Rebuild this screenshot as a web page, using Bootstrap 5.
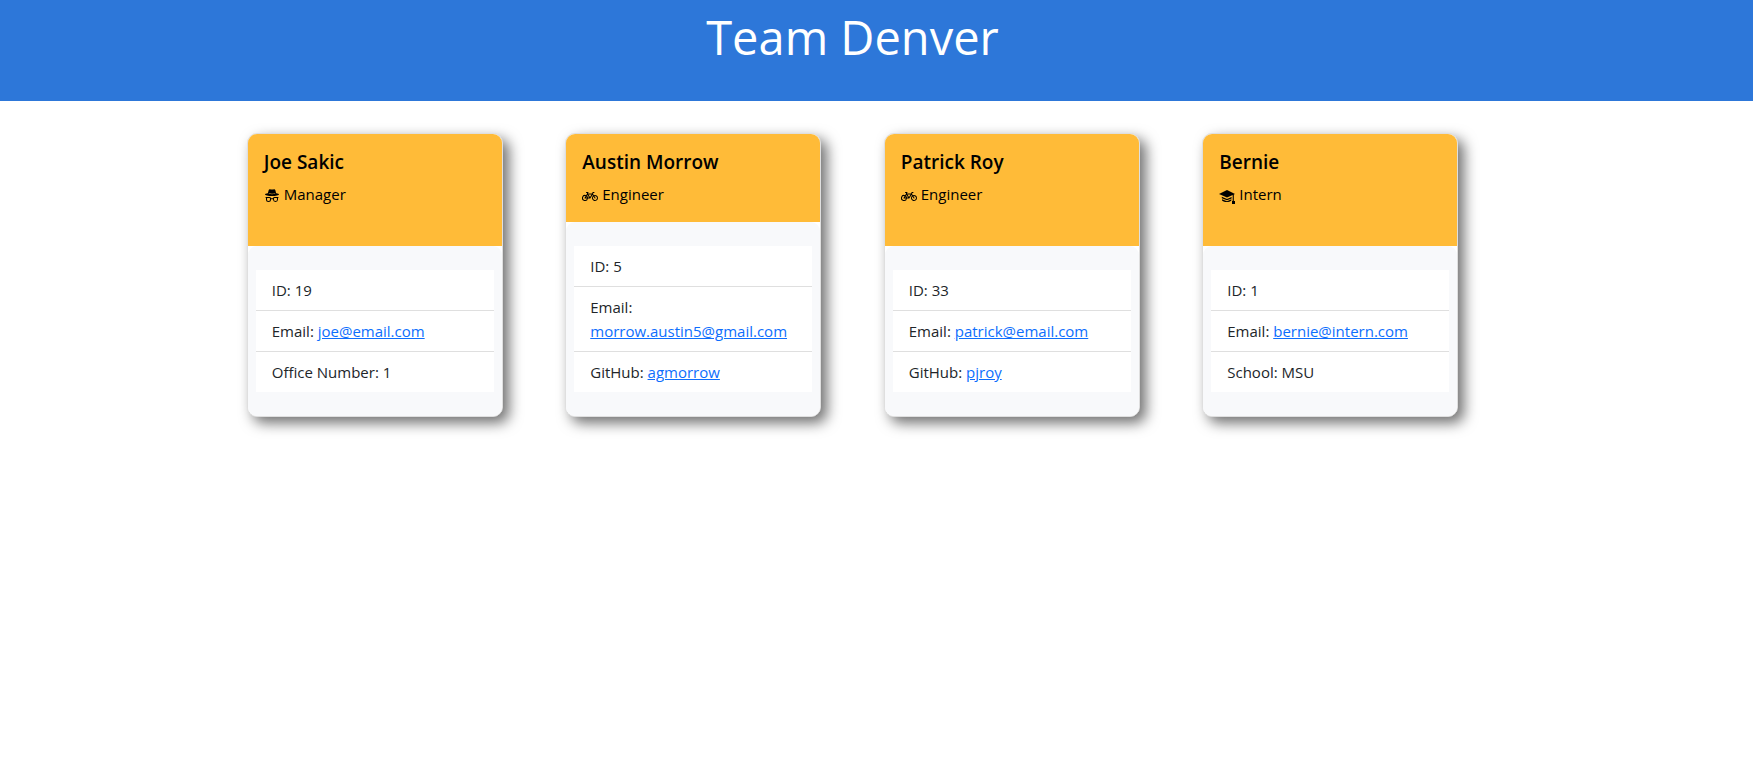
<!DOCTYPE html>
<html lang="en">
<head>
<meta charset="utf-8">
<meta name="viewport" content="width=device-width, initial-scale=1">
<title>Team Denver</title>
<link href="https://cdn.jsdelivr.net/npm/bootstrap@5.3.0/dist/css/bootstrap.min.css" rel="stylesheet">
<style>
  body { font-family: "Segoe UI", "Open Sans", "Noto Sans", sans-serif; font-size: 15px; line-height: 24px; }
  .team-header { background: #2d77d9; min-height: 101px; }
  .team-title { font-size: 47px; line-height: 58px; font-weight: 400; }
  .team-list { max-width: 1274px; row-gap: 32px; }
  .member { width: 256px; border-radius: 10px; border-color: #dfdfdf; box-shadow: 6px 6px 14px #707070; }
  .member-head { background: #ffbb38; border-radius: 9px 9px 0 0; color: #000; }
  .member-name { font-size: 19px; line-height: 24px; font-weight: 600; }
  .member-info { background: #f8f9fb; border-radius: 9px; }
  .member-info .list-group-item { border-color: #dfdfdf; color: #212529; }
  .member-info a { color: #0d6efd; }
  .role-icon { width: 16px; height: 16px; fill: currentColor; margin-top: 6px; }
</style>
</head>
<body class="min-vh-100">
<header class="team-header text-center text-white pt-2 pe-5">
  <h1 class="team-title mb-0">Team Denver</h1>
</header>
<main class="pe-5 pt-2 pb-5">
  <div class="team-list d-flex flex-wrap justify-content-around mx-auto pt-4">
    <section class="card member">
      <div class="member-head p-3 flex-grow-1">
        <h2 class="member-name mb-2">Joe Sakic</h2>
        <div class="d-flex gap-1">
          <svg class="role-icon" viewBox="0 0 16 16" aria-hidden="true"><path fill-rule="evenodd" d="m4.736 1.968-.892 3.269-.014.058C2.113 5.568 1 6.006 1 6.5 1 7.328 4.134 8 8 8s7-.672 7-1.5c0-.494-1.113-.932-2.83-1.205l-.014-.058-.892-3.27c-.146-.533-.698-.849-1.239-.734C9.411 1.363 8.62 1.5 8 1.5s-1.411-.136-2.025-.267c-.541-.115-1.093.2-1.239.735m.015 3.867a.25.25 0 0 1 .274-.224c.9.092 1.91.143 2.975.143a30 30 0 0 0 2.975-.143.25.25 0 0 1 .05.498c-.918.093-1.944.145-3.025.145s-2.107-.052-3.025-.145a.25.25 0 0 1-.224-.274M3.5 10h2a.5.5 0 0 1 .5.5v1a1.5 1.5 0 0 1-3 0v-1a.5.5 0 0 1 .5-.5m-1.5.5q.001-.264.085-.5H2a.5.5 0 0 1 0-1h3.5a1.5 1.5 0 0 1 1.488 1.312 3.5 3.5 0 0 1 2.024 0A1.5 1.5 0 0 1 10.5 9H14a.5.5 0 0 1 0 1h-.085q.084.236.085.5v1a2.5 2.5 0 0 1-5 0v-.14l-.21-.07a2.5 2.5 0 0 0-1.58 0l-.21.07v.14a2.5 2.5 0 0 1-5 0zm8.5-.5h2a.5.5 0 0 1 .5.5v1a1.5 1.5 0 0 1-3 0v-1a.5.5 0 0 1 .5-.5"/></svg>
          <span>Manager</span>
        </div>
      </div>
      <div class="member-info px-2 py-4">
        <ul class="list-group list-group-flush">
          <li class="list-group-item">ID: 19</li>
          <li class="list-group-item">Email: <a href="mailto:joe@email.com">joe@email.com</a></li>
          <li class="list-group-item">Office Number: 1</li>
        </ul>
      </div>
    </section>
    <section class="card member">
      <div class="member-head p-3 flex-grow-1">
        <h2 class="member-name mb-2">Austin Morrow</h2>
        <div class="d-flex gap-1">
          <svg class="role-icon" viewBox="0 0 16 16" aria-hidden="true"><path d="M4 4.5a.5.5 0 0 1 .5-.5H6a.5.5 0 0 1 0 1v.5h4.14l.386-1.158A.5.5 0 0 1 11 4h1a.5.5 0 0 1 0 1h-.64l-.311.935.807 1.29a3 3 0 1 1-.848.53l-.508-.812-2.076 3.322A.5.5 0 0 1 8 10.5H5.959a3 3 0 1 1-1.815-3.274L5 5.856V5h-.5a.5.5 0 0 1-.5-.5m1.5 2.443-.508.814c.5.444.85 1.054.967 1.743h1.139zM8 9.057 9.598 6.5H6.402zM4.937 9.5a2 2 0 0 0-.487-.877l-.548.877zM3.603 8.092A2 2 0 1 0 4.937 10.5H3a.5.5 0 0 1-.424-.765zm7.947.53a2 2 0 1 0 .848-.53l1.026 1.643a.5.5 0 1 1-.848.53z"/></svg>
          <span>Engineer</span>
        </div>
      </div>
      <div class="member-info px-2 py-4">
        <ul class="list-group list-group-flush">
          <li class="list-group-item">ID: 5</li>
          <li class="list-group-item">Email: <a href="mailto:morrow.austin5@gmail.com">morrow.austin5@gmail.com</a></li>
          <li class="list-group-item">GitHub: <a href="https://github.com/agmorrow">agmorrow</a></li>
        </ul>
      </div>
    </section>
    <section class="card member">
      <div class="member-head p-3 flex-grow-1">
        <h2 class="member-name mb-2">Patrick Roy</h2>
        <div class="d-flex gap-1">
          <svg class="role-icon" viewBox="0 0 16 16" aria-hidden="true"><path d="M4 4.5a.5.5 0 0 1 .5-.5H6a.5.5 0 0 1 0 1v.5h4.14l.386-1.158A.5.5 0 0 1 11 4h1a.5.5 0 0 1 0 1h-.64l-.311.935.807 1.29a3 3 0 1 1-.848.53l-.508-.812-2.076 3.322A.5.5 0 0 1 8 10.5H5.959a3 3 0 1 1-1.815-3.274L5 5.856V5h-.5a.5.5 0 0 1-.5-.5m1.5 2.443-.508.814c.5.444.85 1.054.967 1.743h1.139zM8 9.057 9.598 6.5H6.402zM4.937 9.5a2 2 0 0 0-.487-.877l-.548.877zM3.603 8.092A2 2 0 1 0 4.937 10.5H3a.5.5 0 0 1-.424-.765zm7.947.53a2 2 0 1 0 .848-.53l1.026 1.643a.5.5 0 1 1-.848.53z"/></svg>
          <span>Engineer</span>
        </div>
      </div>
      <div class="member-info px-2 py-4">
        <ul class="list-group list-group-flush">
          <li class="list-group-item">ID: 33</li>
          <li class="list-group-item">Email: <a href="mailto:patrick@email.com">patrick@email.com</a></li>
          <li class="list-group-item">GitHub: <a href="https://github.com/pjroy">pjroy</a></li>
        </ul>
      </div>
    </section>
    <section class="card member">
      <div class="member-head p-3 flex-grow-1">
        <h2 class="member-name mb-2">Bernie</h2>
        <div class="d-flex gap-1">
          <svg class="role-icon" viewBox="0 0 16 16" aria-hidden="true"><path d="M8 2 0 6l8 3.400 5.700-2.400v6H13v3h3v-3h-1.200V6.500L16 6z"/><path d="M2.800 8.800 8 11l4.600-2.100v1.500L8 12.300 2.800 10.200zM3 11.200l5 2 4.400-1.900v1.200C10 14.500 5.600 14.500 3 12.500z"/></svg>
          <span>Intern</span>
        </div>
      </div>
      <div class="member-info px-2 py-4">
        <ul class="list-group list-group-flush">
          <li class="list-group-item">ID: 1</li>
          <li class="list-group-item">Email: <a href="mailto:bernie@intern.com">bernie@intern.com</a></li>
          <li class="list-group-item">School: MSU</li>
        </ul>
      </div>
    </section>
  </div>
</main>
<script src="https://cdn.jsdelivr.net/npm/bootstrap@5.3.0/dist/js/bootstrap.bundle.min.js"></script>
</body>
</html>
